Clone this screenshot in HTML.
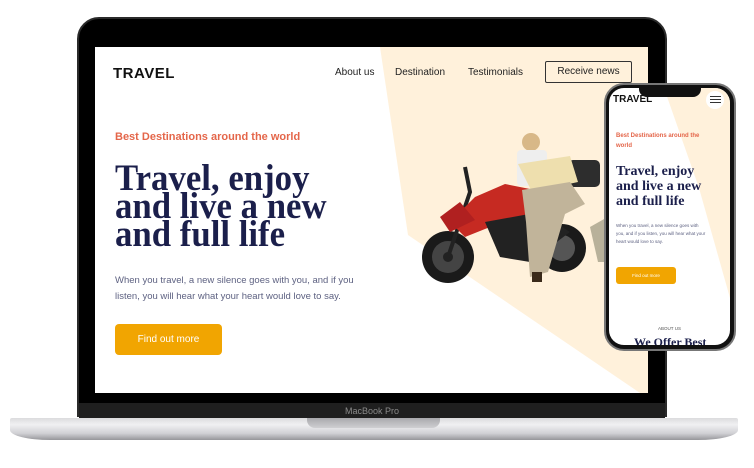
<!DOCTYPE html>
<html><head><meta charset="utf-8"><style>
*{margin:0;padding:0;box-sizing:border-box}
body{width:754px;height:468px;background:#fff;position:relative;overflow:hidden;font-family:"Liberation Sans",sans-serif}
.abs{position:absolute}
.bezel{left:77px;top:17px;width:590px;height:400px;background:#000;border-radius:22px 22px 0 0;border:2px solid #2a2a2a}
.screen{left:95px;top:47px;width:553px;height:346px;background:#fff;overflow:hidden}
.chin{left:79px;top:403px;width:586px;height:16px;background:#1f1f1f;color:#8a8a8a;font-size:9px;text-align:center;line-height:16px}
.base{left:10px;top:418px;width:728px;height:22px;background:linear-gradient(#dcdcde,#f0f0f2 30%,#d0d0d4 70%,#96969a);border-radius:2px 2px 40px 40px/2px 2px 10px 10px}
.notch{left:307px;top:418px;width:133px;height:10px;background:linear-gradient(#a8a8ac,#cfcfd2);border-radius:0 0 8px 8px}
.serif{font-family:"Liberation Serif",serif;font-weight:bold;color:#1b1f4b}
</style></head><body>
<div class="abs bezel"></div>
<div class="abs screen">
 <svg class="abs" style="left:0;top:0" width="553" height="346"><polygon points="285,0 553,0 553,346 545,346 313,188" fill="#fff1db"/></svg>
 <div class="abs" style="left:18px;top:18px;font-size:15px;font-weight:bold;color:#111;letter-spacing:.5px">TRAVEL</div>
 <div class="abs" style="left:240px;top:20px;font-size:10px;color:#222">About us</div>
 <div class="abs" style="left:300px;top:20px;font-size:10px;color:#222">Destination</div>
 <div class="abs" style="left:373px;top:20px;font-size:10px;color:#222">Testimonials</div>
 <div class="abs" style="left:450px;top:14px;width:87px;height:22px;border:1px solid #333;border-radius:2px;font-size:10px;color:#222;text-align:center;line-height:20px">Receive news</div>
 <div class="abs" style="left:20px;top:84px;font-size:11px;font-weight:bold;color:#e4664a">Best Destinations around the world</div>
 <div class="abs serif" style="left:20px;top:118px;font-size:37px;line-height:28px;transform:scaleX(.94);transform-origin:0 0;white-space:nowrap">Travel, enjoy<br>and live a new<br>and full life</div>
 <div class="abs" style="left:20px;top:226px;font-size:9.5px;line-height:16px;color:#5e6282">When you travel, a new silence goes with you, and if you<br>listen, you will hear what your heart would love to say.</div>
 <div class="abs" style="left:20px;top:277px;width:107px;height:31px;background:#f1a501;border-radius:4px;color:#fff;font-size:10px;text-align:center;line-height:31px">Find out more</div>
 <svg class="abs" style="left:325px;top:75px" width="230" height="180">
  <circle cx="28" cy="135" r="26" fill="#1a1a1a"/><circle cx="28" cy="135" r="16" fill="#444"/><circle cx="28" cy="135" r="5" fill="#222"/>
  <circle cx="142" cy="126" r="24" fill="#1a1a1a"/><circle cx="142" cy="126" r="13" fill="#555"/>
  <path d="M28 135 L50 70 L45 45" stroke="#222" stroke-width="4" fill="none"/>
  <polygon points="30,100 55,75 85,62 115,68 125,80 110,95 70,105 45,115" fill="#c62a22"/>
  <polygon points="20,95 40,80 55,98 30,110" fill="#b02020"/>
  <polygon points="65,100 120,90 150,110 110,140 80,135" fill="#222"/>
  <rect x="148" y="38" width="32" height="27" rx="5" fill="#2d2d2d"/>
  <polygon points="170,105 200,88 212,110 205,140 178,140" fill="#b8b19a"/>
  <circle cx="111" cy="20" r="9" fill="#d8b888"/>
  <rect x="97" y="28" width="30" height="36" rx="4" fill="#eee"/>
  <polygon points="98,42 150,34 158,60 112,70" fill="#eedfae"/>
  <polygon points="102,68 150,60 165,82 145,92 128,150 110,155 106,100" fill="#c1b49a"/>
  <rect x="112" y="150" width="10" height="10" fill="#3a2a1a"/>
 </svg>
</div>
<div class="abs chin">MacBook Pro</div>
<div class="abs base"></div>
<div class="abs notch"></div>
<div class="abs" style="left:604px;top:83px;width:132px;height:268px;background:#111;border-radius:20px;border:2px solid #777"></div>
<div class="abs" style="left:609px;top:88px;width:121px;height:257px;background:#fff;border-radius:15px;overflow:hidden">
 <svg class="abs" style="left:0;top:0" width="121" height="257"><polygon points="55,0 121,0 121,210 90,100" fill="#fff1db"/></svg>
 <div class="abs" style="left:4px;top:6px;font-size:10px;font-weight:bold;color:#111">TRAVEL</div>
 <div class="abs" style="left:30px;top:0;width:62px;height:9px;background:#111;border-radius:0 0 8px 8px"></div>
 <div class="abs" style="left:97px;top:3px;width:18px;height:18px;background:#fff;border-radius:50%"></div>
 <div class="abs" style="left:101px;top:8px;width:11px;height:7px;border-top:1px solid #333;border-bottom:1px solid #333"></div>
 <div class="abs" style="left:101px;top:11px;width:11px;height:1px;background:#333"></div>
 <div class="abs" style="left:7px;top:43px;font-size:6px;line-height:10px;font-weight:bold;color:#e4664a;width:100px">Best Destinations around the world</div>
 <div class="abs serif" style="left:7px;top:76px;font-size:14px;line-height:15px">Travel, enjoy<br>and live a new<br>and full life</div>
 <div class="abs" style="left:7px;top:134px;font-size:4.5px;line-height:8px;color:#5e6282;width:90px">When you travel, a new silence goes with you, and if you listen, you will hear what your heart would love to say.</div>
 <div class="abs" style="left:7px;top:179px;width:60px;height:17px;background:#f1a501;border-radius:3px;color:#fff;font-size:4.5px;text-align:center;line-height:17px">Find out more</div>
 <div class="abs" style="left:0;top:238px;width:121px;text-align:center;font-size:4.5px;color:#555">ABOUT US</div>
 <div class="abs serif" style="left:25px;top:247px;font-size:12px">We Offer Best</div>
</div>
</body></html>
